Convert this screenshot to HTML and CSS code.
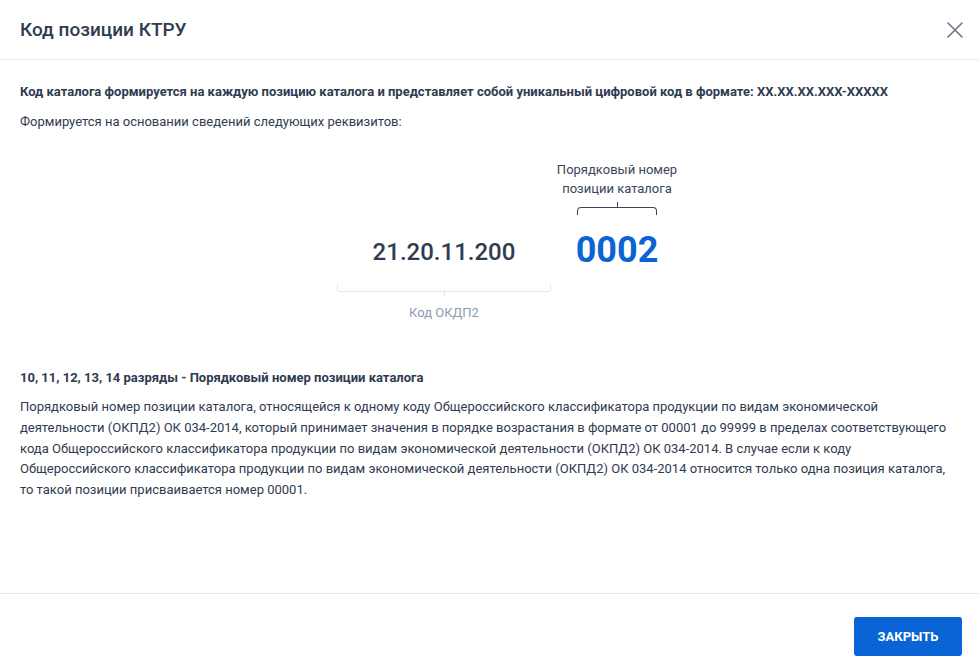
FILE: index.html
```html
<!DOCTYPE html>
<html lang="ru">
<head>
<meta charset="utf-8">
<title>Код позиции КТРУ</title>
<link rel="stylesheet" href="styles.css">
</head>
<body>
<div class="modal">
  <header class="modal-header">
    <h1 class="modal-title">Код позиции КТРУ</h1>
    <button class="close-btn" aria-label="Закрыть">
      <svg width="16" height="16" viewBox="0 0 16 16"><path d="M1 1L15 15M15 1L1 15" stroke="#6b7588" stroke-width="1.6" fill="none" stroke-linecap="round"/></svg>
    </button>
  </header>
  <main class="modal-body">
    <p class="lead">Код каталога формируется на каждую позицию каталога и представляет собой уникальный цифровой код в формате: XX.XX.XX.XXX-XXXXX</p>
    <p class="text">Формируется на основании сведений следующих реквизитов:</p>

    <div class="diagram">
      <div class="part part-okpd">
        <div class="num num-okpd">21.20.11.200</div>
        <div class="bracket bracket-bottom"></div>
        <div class="tick tick-bottom"></div>
        <div class="label label-muted">Код ОКДП2</div>
      </div>
      <div class="part part-pos">
        <div class="label label-dark">Порядковый номер<br>позиции каталога</div>
        <div class="tick tick-top"></div>
        <div class="bracket bracket-top"></div>
        <div class="num num-pos">0002</div>
      </div>
    </div>

    <h2 class="section-title">10, 11, 12, 13, 14 разряды - Порядковый номер позиции каталога</h2>
    <p class="para">Порядковый номер позиции каталога, относящейся к одному коду Общероссийского классификатора продукции по видам экономической деятельности (ОКПД2) ОК 034-2014, который принимает значения в порядке возрастания в формате от 00001 до 99999 в пределах соответствующего кода Общероссийского классификатора продукции по видам экономической деятельности (ОКПД2) ОК 034-2014. В случае если к коду Общероссийского классификатора продукции по видам экономической деятельности (ОКПД2) ОК 034-2014 относится только одна позиция каталога, то такой позиции присваивается номер 00001.</p>
  </main>
  <footer class="modal-footer">
    <button class="primary-btn">ЗАКРЫТЬ</button>
  </footer>
</div>
</body>
</html>
```

FILE: styles.css
```css
* { box-sizing: border-box; }
html, body { margin: 0; padding: 0; background: #fff; }
body {
  font-family: Roboto, "Liberation Sans", Arial, sans-serif;
  color: #2f3b50;
}
.modal {
  width: 979px;
  height: 668px;
  display: flex;
  flex-direction: column;
}
.modal-header {
  height: 60px;
  border-bottom: 1px solid #e8eaef;
  display: flex;
  align-items: center;
  justify-content: space-between;
  padding: 0 15px 0 20px;
}
.modal-title {
  margin: 0;
  font-size: 19px;
  font-weight: 500;
  color: #2f3b50;
}
.close-btn {
  background: none;
  border: 0;
  padding: 0;
  width: 18px;
  height: 18px;
  display: flex;
  align-items: center;
  justify-content: center;
  cursor: pointer;
}
.modal-body {
  flex: 1;
  padding: 23px 20px 0 20px;
}
.lead {
  margin: 0;
  font-size: 13px;
  font-weight: 700;
  line-height: 18px;
}
.text {
  margin: 12px 0 0 0;
  font-size: 13px;
  line-height: 18px;
}
.diagram {
  display: flex;
  justify-content: center;
  gap: 26px;
  padding-left: 15px;
  margin-top: 29px;
  height: 193px;
}
.part {
  display: flex;
  flex-direction: column;
  align-items: center;
}
.part-okpd { width: 214px; padding-top: 77px; }
.part-pos { width: 80px; }
.num-okpd {
  font-size: 24px;
  font-weight: 500;
  line-height: 30px;
  color: #2f3b50;
}
.num-pos {
  font-size: 36px;
  font-weight: 700;
  line-height: 40px;
  color: #0a64d6;
  margin-top: 15px;
}
.label {
  font-size: 13px;
  line-height: 19px;
  text-align: center;
  white-space: nowrap;
}
.label-dark { color: #3a465a; }
.label-muted { color: #8e9bb4; margin-top: 6px; }
.bracket {
  width: 100%;
  height: 8px;
}
.bracket-top {
  border: 1.3px solid #3a465a;
  border-bottom: 0;
  border-radius: 4px 4px 0 0;
}
.bracket-bottom {
  margin-top: 17px;
  width: 214px;
  border: 1px solid #e1e4ee;
  border-top: 0;
  border-radius: 0 0 4px 4px;
}
.tick {
  width: 1px;
  height: 5px;
}
.tick-top { background: #3a465a; margin-top: 4px; }
.tick-bottom { background: #e1e4ee; }
.section-title {
  margin: 16px 0 0 0;
  font-size: 13px;
  font-weight: 700;
  line-height: 18px;
}
.para {
  margin: 10px 0 0 0;
  font-size: 13px;
  line-height: 20.75px;
}
.modal-footer {
  height: 75px;
  border-top: 1px solid #e3e5ec;
  display: flex;
  justify-content: flex-end;
  align-items: flex-start;
  padding: 23px 17px 0 0;
}
.primary-btn {
  width: 108px;
  height: 39px;
  border: 0;
  border-radius: 3px;
  background: #0a64d6;
  color: #fff;
  font-family: Roboto, "Liberation Sans", Arial, sans-serif;
  font-size: 13px;
  font-weight: 700;
  cursor: pointer;
}
```
